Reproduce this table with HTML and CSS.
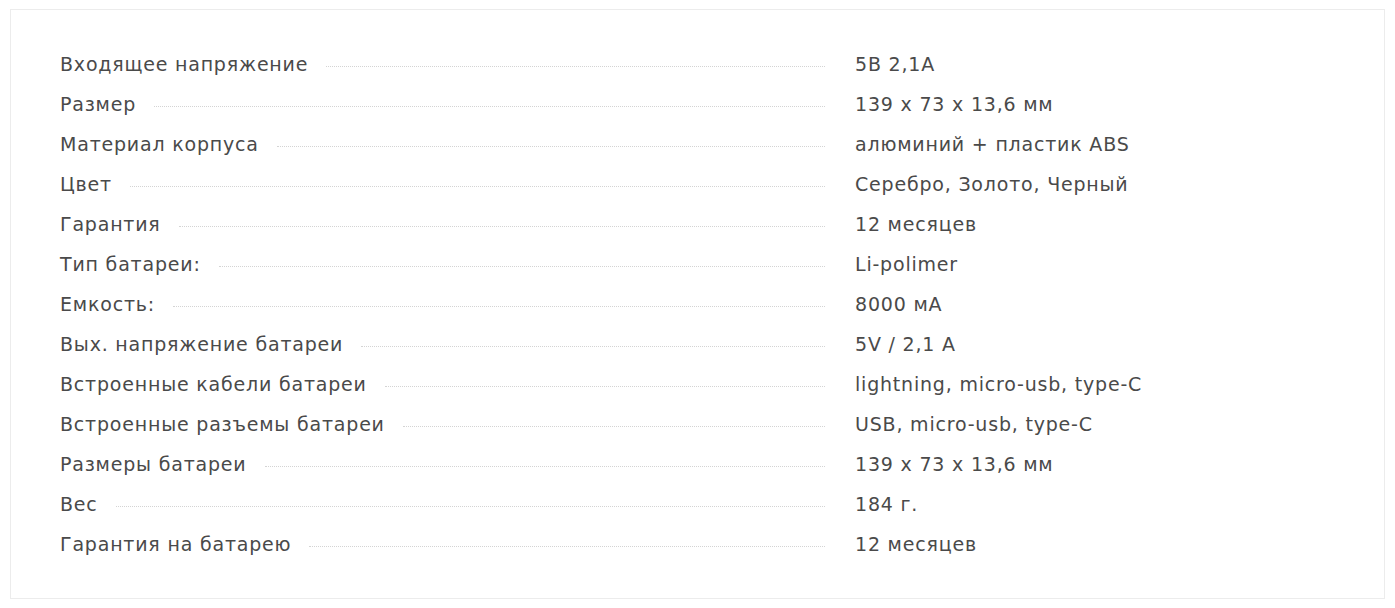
FILE: index.html
```html
<!DOCTYPE html>
<html lang="ru">
<head>
<meta charset="utf-8">
<title>Характеристики</title>
<link rel="stylesheet" href="styles.css">
</head>
<body>
<div class="specs">
  <div class="row"><div class="label"><span class="name">Входящее напряжение</span><span class="dots"></span></div><div class="value">5В 2,1А</div></div>
  <div class="row"><div class="label"><span class="name">Размер</span><span class="dots"></span></div><div class="value">139 х 73 х 13,6 мм</div></div>
  <div class="row"><div class="label"><span class="name">Материал корпуса</span><span class="dots"></span></div><div class="value">алюминий + пластик ABS</div></div>
  <div class="row"><div class="label"><span class="name">Цвет</span><span class="dots"></span></div><div class="value">Серебро, Золото, Черный</div></div>
  <div class="row"><div class="label"><span class="name">Гарантия</span><span class="dots"></span></div><div class="value">12 месяцев</div></div>
  <div class="row"><div class="label"><span class="name">Тип батареи:</span><span class="dots"></span></div><div class="value">Li-polimer</div></div>
  <div class="row"><div class="label"><span class="name">Емкость:</span><span class="dots"></span></div><div class="value">8000 мА</div></div>
  <div class="row"><div class="label"><span class="name">Вых. напряжение батареи</span><span class="dots"></span></div><div class="value">5V / 2,1 А</div></div>
  <div class="row"><div class="label"><span class="name">Встроенные кабели батареи</span><span class="dots"></span></div><div class="value">lightning, micro-usb, type-C</div></div>
  <div class="row"><div class="label"><span class="name">Встроенные разъемы батареи</span><span class="dots"></span></div><div class="value">USB, micro-usb, type-C</div></div>
  <div class="row"><div class="label"><span class="name">Размеры батареи</span><span class="dots"></span></div><div class="value">139 х 73 х 13,6 мм</div></div>
  <div class="row"><div class="label"><span class="name">Вес</span><span class="dots"></span></div><div class="value">184 г.</div></div>
  <div class="row"><div class="label"><span class="name">Гарантия на батарею</span><span class="dots"></span></div><div class="value">12 месяцев</div></div>
</div>
</body>
</html>
```
FILE: styles.css
```css
html, body {
  margin: 0;
  padding: 0;
  background: #ffffff;
}
body {
  padding: 9px 10px 9px 10px;
  font-family: "DejaVu Sans", "Open Sans", sans-serif;
  color: #4a4a4a;
}
.specs {
  border: 1px solid #ececec;
  padding: 34px 49px 36px 49px;
  height: 590px;
  box-sizing: border-box;
}
.row {
  display: grid;
  grid-template-columns: 60% 40%;
  height: 40px;
  align-items: center;
  font-size: 19px;
  letter-spacing: 0.8px;
}
.label {
  display: flex;
  align-items: center;
  min-width: 0;
}
.name {
  white-space: nowrap;
}
.dots {
  flex: 1;
  margin-left: 18px;
  margin-top: 5px;
  border-bottom: 1px dotted #d4d4d4;
}
.value {
  padding-left: 30px;
  white-space: nowrap;
}
```
